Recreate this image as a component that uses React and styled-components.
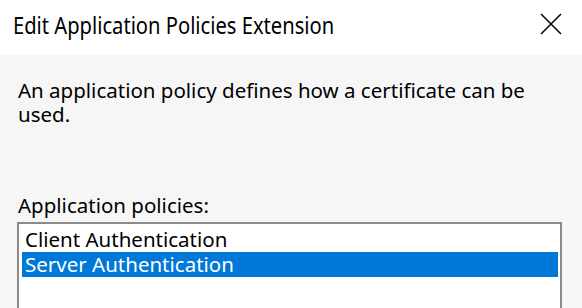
import React, { useState } from 'react';
import styled, { createGlobalStyle } from 'styled-components';

const GlobalStyle = createGlobalStyle`
  html, body {
    margin: 0;
    padding: 0;
    background: #f6f6f6;
    overflow: hidden;
  }

  body {
    font-family: "Noto Sans", "Open Sans", sans-serif;
    color: #000;
  }
`;

const policies = ['Client Authentication', 'Server Authentication'];

const App = () => {
  const [selected, setSelected] = useState(1);

  return (
    <>
      <GlobalStyle />
      <Dialog>
        <TitleBar>
          <Title>Edit Application Policies Extension</Title>
          <CloseButton aria-label="Close">
            <svg width="22" height="22" viewBox="0 0 22 22">
              <path d="M1 1 L21 21 M21 1 L1 21" stroke="#000" strokeWidth="1.5" fill="none" />
            </svg>
          </CloseButton>
        </TitleBar>
        <Body>
          <Description>
            An application policy defines how a certificate can be used.
          </Description>
          <Label>Application policies:</Label>
          <ListBox>
            {policies.map((policy, i) => (
              <ListItem
                key={policy}
                $selected={i === selected}
                onClick={() => setSelected(i)}
              >
                {policy}
              </ListItem>
            ))}
          </ListBox>
        </Body>
      </Dialog>
    </>
  );
};

const Dialog = styled.div`
  width: 582px;
  height: 308px;
  display: flex;
  flex-direction: column;
  overflow: hidden;
`;

const TitleBar = styled.div`
  height: 55px;
  flex-shrink: 0;
  background: #fff;
  display: flex;
  align-items: flex-start;
  justify-content: space-between;
  padding: 0 20px 0 13px;
  box-sizing: border-box;
`;

const Title = styled.div`
  margin-top: 11px;
  font-size: 24px;
  line-height: 28px;
  white-space: nowrap;
  transform: scaleX(0.84);
  transform-origin: left center;
`;

const CloseButton = styled.div`
  margin-top: 13px;
  width: 22px;
  height: 22px;
  display: flex;

  svg {
    display: block;
  }
`;

const Body = styled.div`
  flex: 1;
  min-height: 0;
  padding: 23px 20px 0 18px;
  display: flex;
  flex-direction: column;
`;

const Description = styled.p`
  margin: 0;
  width: 520px;
  font-size: 20.5px;
  line-height: 24px;
`;

const Label = styled.div`
  margin-top: 67px;
  font-size: 20.5px;
  line-height: 24px;
`;

const ListBox = styled.div`
  flex: 1;
  margin: 5px 0 0 -1px;
  width: 545px;
  box-sizing: border-box;
  border: 2px solid #8a8a8a;
  border-bottom: none;
  background: #fff;
  padding: 3px 2px 0 3px;
`;

const ListItem = styled.div`
  height: 25px;
  padding-left: 3px;
  font-size: 20.5px;
  line-height: 25px;
  white-space: nowrap;
  background: ${({ $selected }) => ($selected ? '#0078d7' : 'transparent')};
  color: ${({ $selected }) => ($selected ? '#fff' : '#000')};
  cursor: default;
`;

export default App;
